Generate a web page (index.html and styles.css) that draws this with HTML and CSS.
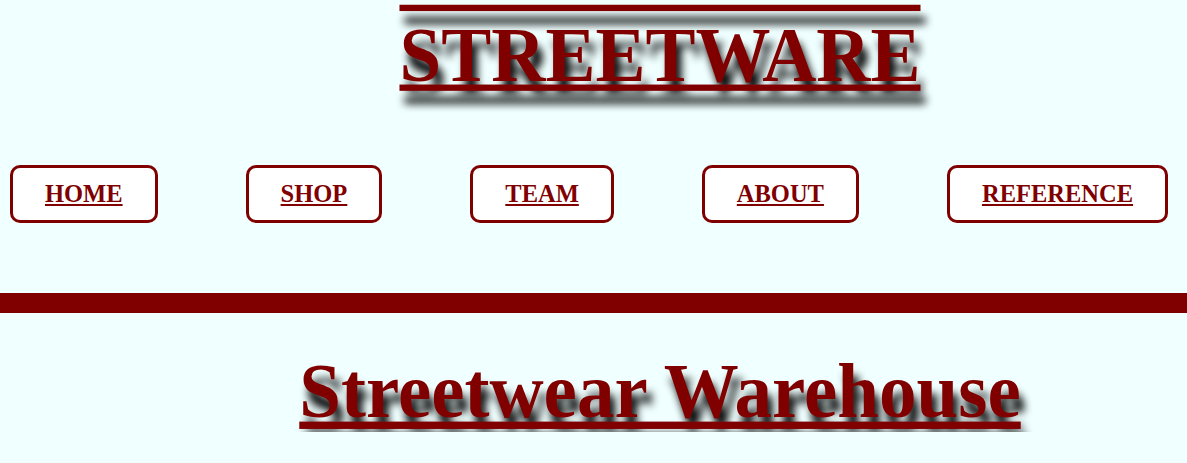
FILE: index.html
```html
<!DOCTYPE html>
<html>
<head>
<meta charset="utf-8">
<title>Streetware</title>
<link rel="stylesheet" href="styles.css">
</head>
<body>
<header class="site-header">
  <h1 class="brand">STREETWARE</h1>
</header>
<nav class="main-nav">
  <a class="nav-btn" href="#">HOME</a>
  <a class="nav-btn" href="#">SHOP</a>
  <a class="nav-btn" href="#">TEAM</a>
  <a class="nav-btn" href="#">ABOUT</a>
  <a class="nav-btn" href="#">REFERENCE</a>
</nav>
<div class="divider"></div>
<main class="content">
  <h2 class="headline">Streetwear Warehouse</h2>
</main>
</body>
</html>
```
FILE: styles.css
```css
html, body {
  margin: 0;
  padding: 0;
}
body {
  background: #f0ffff;
  font-family: "Liberation Serif", "Times New Roman", serif;
  color: #800000;
  overflow: hidden;
}
.site-header {
  display: flex;
  justify-content: center;
  padding-left: 133px;
  padding-top: 10px;
}
.brand {
  margin: 0;
  font-size: 75px;
  font-weight: bold;
  color: #800000;
  text-decoration: underline overline;
  text-decoration-thickness: 6px;
  text-shadow: 5px 12px 8px #000;
  line-height: normal;
  transform: scaleY(1.05);
  transform-origin: top center;
}
.main-nav {
  display: flex;
  gap: 88px;
  padding-left: 10px;
  margin-top: 69px;
}
.nav-btn {
  display: block;
  background: #fff;
  border: 3px solid #800000;
  border-radius: 10px;
  padding: 12px 32px;
  font-size: 24.5px;
  font-weight: bold;
  color: #800000;
  text-decoration: underline;
  white-space: nowrap;
}
.divider {
  height: 20px;
  background: #800000;
  margin-top: 70px;
}
.content {
  display: flex;
  justify-content: center;
  padding-left: 133px;
  margin-top: 33px;
}
.headline {
  margin: 0;
  font-size: 75px;
  font-weight: bold;
  line-height: normal;
  color: #800000;
  text-decoration: underline;
  text-decoration-thickness: 7px;
  text-shadow: 5px 12px 8px #000;
  transform: scaleY(1.05);
  transform-origin: top center;
}
```
